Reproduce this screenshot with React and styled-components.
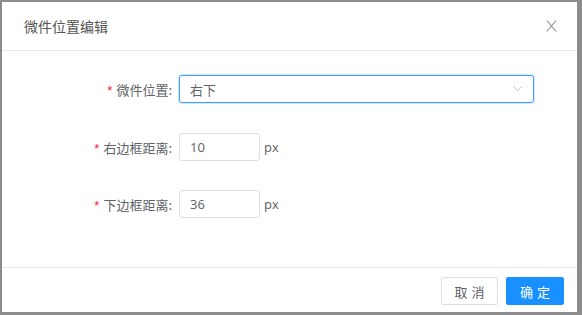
import React from "react";
import styled, { createGlobalStyle } from "styled-components";

const Global = createGlobalStyle`
  html, body { margin: 0; padding: 0; background: #8c8c8c; }
  body { font-family: "Noto Sans CJK SC", "Noto Sans", sans-serif; }
  * { box-sizing: border-box; }
`;

const Page = styled.div`
  width: 582px;
  height: 315px;
  padding: 2px 5px 3px 2px;
  overflow: hidden;
`;

const Modal = styled.div`
  width: 575px;
  height: 310px;
  background: #fff;
  display: flex;
  flex-direction: column;
`;

const Header = styled.div`
  height: 49px;
  flex: none;
  display: flex;
  align-items: center;
  justify-content: space-between;
  padding: 0 19px 0 22px;
  border-bottom: 1px solid #e9e9e9;
`;

const Title = styled.div`
  font-size: 14px;
  color: #555;
  line-height: 20px;
  padding-bottom: 1px;
`;

const Close = styled.button`
  border: 0;
  background: none;
  padding: 0;
  width: 14px;
  height: 14px;
  display: flex;
  align-items: center;
  justify-content: center;
  cursor: pointer;
`;

const Body = styled.div`
  flex: 1;
  padding-top: 24px;
  display: flex;
  flex-direction: column;
`;

const Row = styled.div`
  display: flex;
  align-items: center;
  height: 28px;
  margin-bottom: ${(p) => p.$mb || 0}px;
`;

const Label = styled.label`
  width: 171px;
  flex: none;
  text-align: right;
  padding-right: 1px;
  margin-right: 6px;
  font-size: 13px;
  color: #606266;
  white-space: nowrap;
`;

const Star = styled.span`
  color: #f5222d;
  margin-right: 4px;
  font-family: "Liberation Sans", sans-serif;
`;

const Select = styled.div`
  width: 355px;
  height: 28px;
  border: 1px solid #409eff;
  border-radius: 3px;
  box-shadow: 0 0 0 1px rgba(64, 158, 255, 0.25);
  display: flex;
  align-items: center;
  justify-content: space-between;
  padding: 0 11px 0 10px;
  font-size: 13px;
  color: #606266;
`;

const Input = styled.div`
  width: 81px;
  height: 28px;
  border: 1px solid #dcdfe6;
  border-radius: 3px;
  display: flex;
  align-items: center;
  padding-left: 10px;
  font-size: 13px;
  color: #606266;
  font-family: "Open Sans", "Noto Sans", sans-serif;
`;

const Unit = styled.span`
  margin-left: 4px;
  font-size: 13px;
  color: #606266;
  font-family: "Open Sans", "Noto Sans", sans-serif;
`;

const Footer = styled.div`
  height: 45px;
  flex: none;
  border-top: 1px solid #e9e9e9;
  display: flex;
  justify-content: flex-end;
  align-items: flex-start;
  gap: 8px;
  padding: 9px 13px 0 0;
`;

const Button = styled.button`
  width: ${(p) => p.$w || 57}px;
  height: 28px;
  border-radius: 2px;
  font-size: 13px;
  letter-spacing: 4px;
  text-indent: 4px;
  font-family: "Noto Sans CJK SC", sans-serif;
  border: 1px solid ${(p) => (p.$primary ? "#1890ff" : "#dcdfe6")};
  background: ${(p) => (p.$primary ? "#1890ff" : "#fff")};
  color: ${(p) => (p.$primary ? "#fff" : "#606266")};
  display: flex;
  align-items: center;
  justify-content: center;
  padding: 0;
`;

export default function App() {
  return (
    <Page>
      <Global />
      <Modal>
        <Header>
          <Title>微件位置编辑</Title>
          <Close aria-label="close">
            <svg width="11" height="12" viewBox="0 0 11 12">
              <path d="M0.8 0.5 L10.2 11.5 M10.2 0.5 L0.8 11.5" stroke="#8c8c8c" strokeWidth="1.1" fill="none" />
            </svg>
          </Close>
        </Header>
        <Body>
          <Row $mb={30}>
            <Label><Star>*</Star>微件位置:</Label>
            <Select>
              <span>右下</span>
              <svg width="9" height="6" viewBox="0 0 9 6">
                <path d="M0.5 0.5 L4.5 5 L8.5 0.5" stroke="#c0c4cc" strokeWidth="1" fill="none" />
              </svg>
            </Select>
          </Row>
          <Row $mb={29}>
            <Label><Star>*</Star>右边框距离:</Label>
            <Input>10</Input>
            <Unit>px</Unit>
          </Row>
          <Row>
            <Label><Star>*</Star>下边框距离:</Label>
            <Input>36</Input>
            <Unit>px</Unit>
          </Row>
        </Body>
        <Footer>
          <Button>取消</Button>
          <Button $primary $w={58}>确定</Button>
        </Footer>
      </Modal>
    </Page>
  );
}
